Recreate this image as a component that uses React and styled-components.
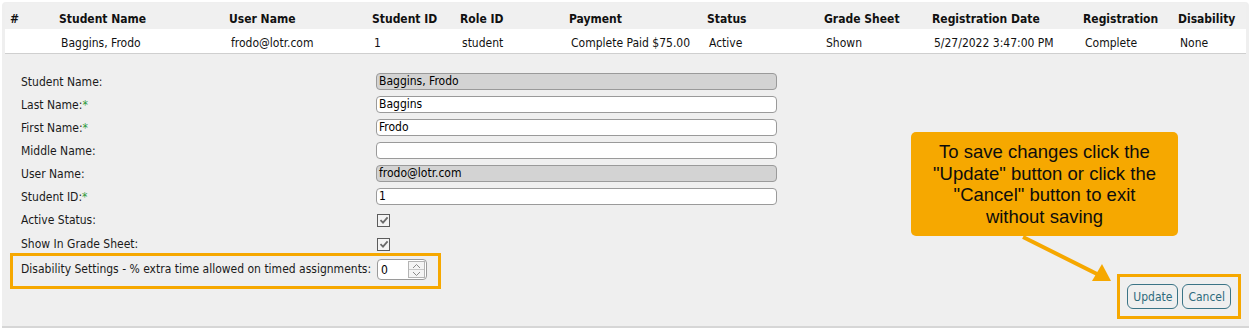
import React from "react";
import styled, { createGlobalStyle } from "styled-components";

const GlobalStyle = createGlobalStyle`
    body {
        margin: 0;
        background: #ffffff;
        font-family: "DejaVu Sans Condensed", "DejaVu Sans", sans-serif;
        font-stretch: condensed;
        font-size: 12px;
        color: #111;
    }
`;

const columns = [
    { title: "#", value: "" },
    { title: "Student Name", value: "Baggins, Frodo" },
    { title: "User Name", value: "frodo@lotr.com" },
    { title: "Student ID", value: "1" },
    { title: "Role ID", value: "student" },
    { title: "Payment", value: "Complete Paid $75.00" },
    { title: "Status", value: "Active" },
    { title: "Grade Sheet", value: "Shown" },
    { title: "Registration Date", value: "5/27/2022 3:47:00 PM" },
    { title: "Registration", value: "Complete" },
    { title: "Disability", value: "None" },
];

const fields = [
    { label: "Student Name:", value: "Baggins, Frodo", readOnly: true },
    { label: "Last Name:", value: "Baggins", required: true },
    { label: "First Name:", value: "Frodo", required: true },
    { label: "Middle Name:", value: "" },
    { label: "User Name:", value: "frodo@lotr.com", readOnly: true },
    { label: "Student ID:", value: "1", required: true },
];

const checks = ["Active Status:", "Show In Grade Sheet:"];

const App = () => {
    return (
        <>
            <GlobalStyle />
            <Panel>
                <Table>
                    <HeadRow>
                        {columns.map((c) => (
                            <HeadCell key={c.title}>{c.title}</HeadCell>
                        ))}
                    </HeadRow>
                    <DataRow>
                        {columns.map((c) => (
                            <DataCell key={c.title}>{c.value}</DataCell>
                        ))}
                    </DataRow>
                </Table>

                <FormArea>
                    <Fields>
                        {fields.map((f) => (
                            <FieldRow key={f.label}>
                                <Label>
                                    {f.label}
                                    {f.required && <Star>*</Star>}
                                </Label>
                                <TextBox readOnly={f.readOnly}>{f.value}</TextBox>
                            </FieldRow>
                        ))}
                        {checks.map((label) => (
                            <CheckRow key={label}>
                                <Label>{label}</Label>
                                <CheckBox>
                                    <svg width="10" height="10" viewBox="0 0 10 10">
                                        <path d="M1.5 5.2 L4 7.6 L8.6 2.4" fill="none" stroke="#6b6b6b" strokeWidth="1.8" />
                                    </svg>
                                </CheckBox>
                            </CheckRow>
                        ))}
                        <Highlight>
                            <Label>Disability Settings - % extra time allowed on timed assignments:</Label>
                            <NumberBox>
                                <span>0</span>
                                <Spinner>
                                    <SpinButton>
                                        <svg width="9" height="6" viewBox="0 0 9 6">
                                            <path d="M1 5 L4.5 1.5 L8 5" fill="none" stroke="#8a8a8a" strokeWidth="1" />
                                        </svg>
                                    </SpinButton>
                                    <SpinButton>
                                        <svg width="9" height="6" viewBox="0 0 9 6">
                                            <path d="M1 1 L4.5 4.5 L8 1" fill="none" stroke="#8a8a8a" strokeWidth="1" />
                                        </svg>
                                    </SpinButton>
                                </Spinner>
                            </NumberBox>
                        </Highlight>
                    </Fields>

                    <Actions>
                        <Highlight $tight>
                            <Button>Update</Button>
                            <Button>Cancel</Button>
                        </Highlight>
                    </Actions>

                    <Callout>
                        To save changes click the<br />
                        "Update" button or click the<br />
                        "Cancel" button to exit<br />
                        without saving
                    </Callout>
                    <Arrow width="100" height="55" viewBox="0 0 100 55">
                        <line x1="4" y1="3" x2="80" y2="41" stroke="#f6a800" strokeWidth="4" />
                        <polygon points="92,47 73,47 83,30" fill="#f6a800" />
                    </Arrow>
                </FormArea>
            </Panel>
        </>
    );
};

const Panel = styled.div`
    margin: 2px 4px 0 2px;
    padding: 1px 3px 0 3px;
    background: #efefef;
    border-radius: 4px 4px 0 0;
    border-bottom: 2px solid #d6d6d6;
    height: 326px;
    box-sizing: border-box;
`;

const Table = styled.div`
    display: flex;
    flex-direction: column;
`;

const grid = `
    display: grid;
    grid-template-columns: 49px 170px 143px 88px 109px 138px 117px 108px 151px 95px 1fr;
    padding-left: 3px;
    align-items: center;
`;

const HeadRow = styled.div`
    ${grid}
    height: 26px;
    background: #f0f0f0;
`;

const DataRow = styled.div`
    ${grid}
    height: 24px;
    background: #ffffff;
    border-bottom: 1px solid #cfcfcf;
`;

const HeadCell = styled.div`
    padding-left: 2px;
    padding-top: 5px;
    font-weight: bold;
    white-space: nowrap;
`;

const DataCell = styled.div`
    padding-left: 4px;
    padding-top: 4px;
    white-space: nowrap;
`;

const FormArea = styled.div`
    position: relative;
    display: flex;
    justify-content: space-between;
    padding: 16px 5px 0 3px;
`;

const Fields = styled.div`
    display: flex;
    flex-direction: column;
`;

const FieldRow = styled.div`
    display: grid;
    grid-template-columns: 355px 400px;
    align-items: center;
    height: 23px;
    padding-left: 13px;
`;

const CheckRow = styled(FieldRow)`
    height: 24px;
`;

const Label = styled.div`
    color: #1a1a1a;
    white-space: nowrap;
`;

const Star = styled.span`
    color: #2f9a3a;
`;

const TextBox = styled.div`
    box-sizing: border-box;
    height: 17px;
    width: 401px;
    padding: 0 2px;
    line-height: 15px;
    border: 1px solid #9a9a9a;
    border-radius: 4px;
    background: ${(p) => (p.readOnly ? "#d3d3d3" : "#ffffff")};
    color: #000;
`;

const CheckBox = styled.div`
    box-sizing: border-box;
    width: 13px;
    height: 13px;
    margin-left: 1px;
    border: 1px solid #5c5c5c;
    background: #f4f4f4;
    display: flex;
    align-items: center;
    justify-content: center;
`;

const Highlight = styled.div`
    display: flex;
    align-items: center;
    border: 3px solid #f6a800;
    padding: ${(p) => (p.$tight ? "7px" : "3px 11px 6px 8px")};
    gap: ${(p) => (p.$tight ? "4px" : "0")};
    margin: ${(p) => (p.$tight ? "0" : "-3px 0 0 2px")};
    width: fit-content;

    & > ${Label} {
        width: 356px;
        padding-bottom: 2px;
    }
`;

const NumberBox = styled.div`
    box-sizing: border-box;
    width: 50px;
    height: 21px;
    border: 1px solid #9a9a9a;
    border-radius: 4px;
    background: #ffffff;
    display: flex;
    align-items: center;
    justify-content: space-between;
    padding: 0 1px 0 3px;
    color: #000;
`;

const Spinner = styled.div`
    display: flex;
    flex-direction: column;
    border: 1px solid #b4b4b4;
    height: 17px;
    box-sizing: border-box;
`;

const SpinButton = styled.div`
    width: 15px;
    height: 7px;
    display: flex;
    align-items: center;
    justify-content: center;
    background: #f4f4f4;

    & + & {
        border-top: 1px solid #c8c8c8;
    }
`;

const Actions = styled.div`
    display: flex;
    align-items: flex-end;
    padding-top: 204px;
`;

const Button = styled.div`
    box-sizing: border-box;
    height: 25px;
    padding: 0 5px;
    display: flex;
    align-items: center;
    border: 1px solid #3b7486;
    border-radius: 6px;
    background: #efefef;
    color: #2e6b7d;
`;

const Callout = styled.div`
    position: absolute;
    left: 906px;
    top: 78px;
    width: 267px;
    height: 104px;
    box-sizing: border-box;
    padding-top: 9px;
    border-radius: 5px;
    background: #f6a800;
    color: #0d0d0d;
    font-family: "Liberation Sans", Arial, sans-serif;
    font-stretch: normal;
    font-size: 18.5px;
    line-height: 21.5px;
    text-align: center;
`;

const Arrow = styled.svg`
    position: absolute;
    left: 1014px;
    top: 180px;
`;

export default App;
